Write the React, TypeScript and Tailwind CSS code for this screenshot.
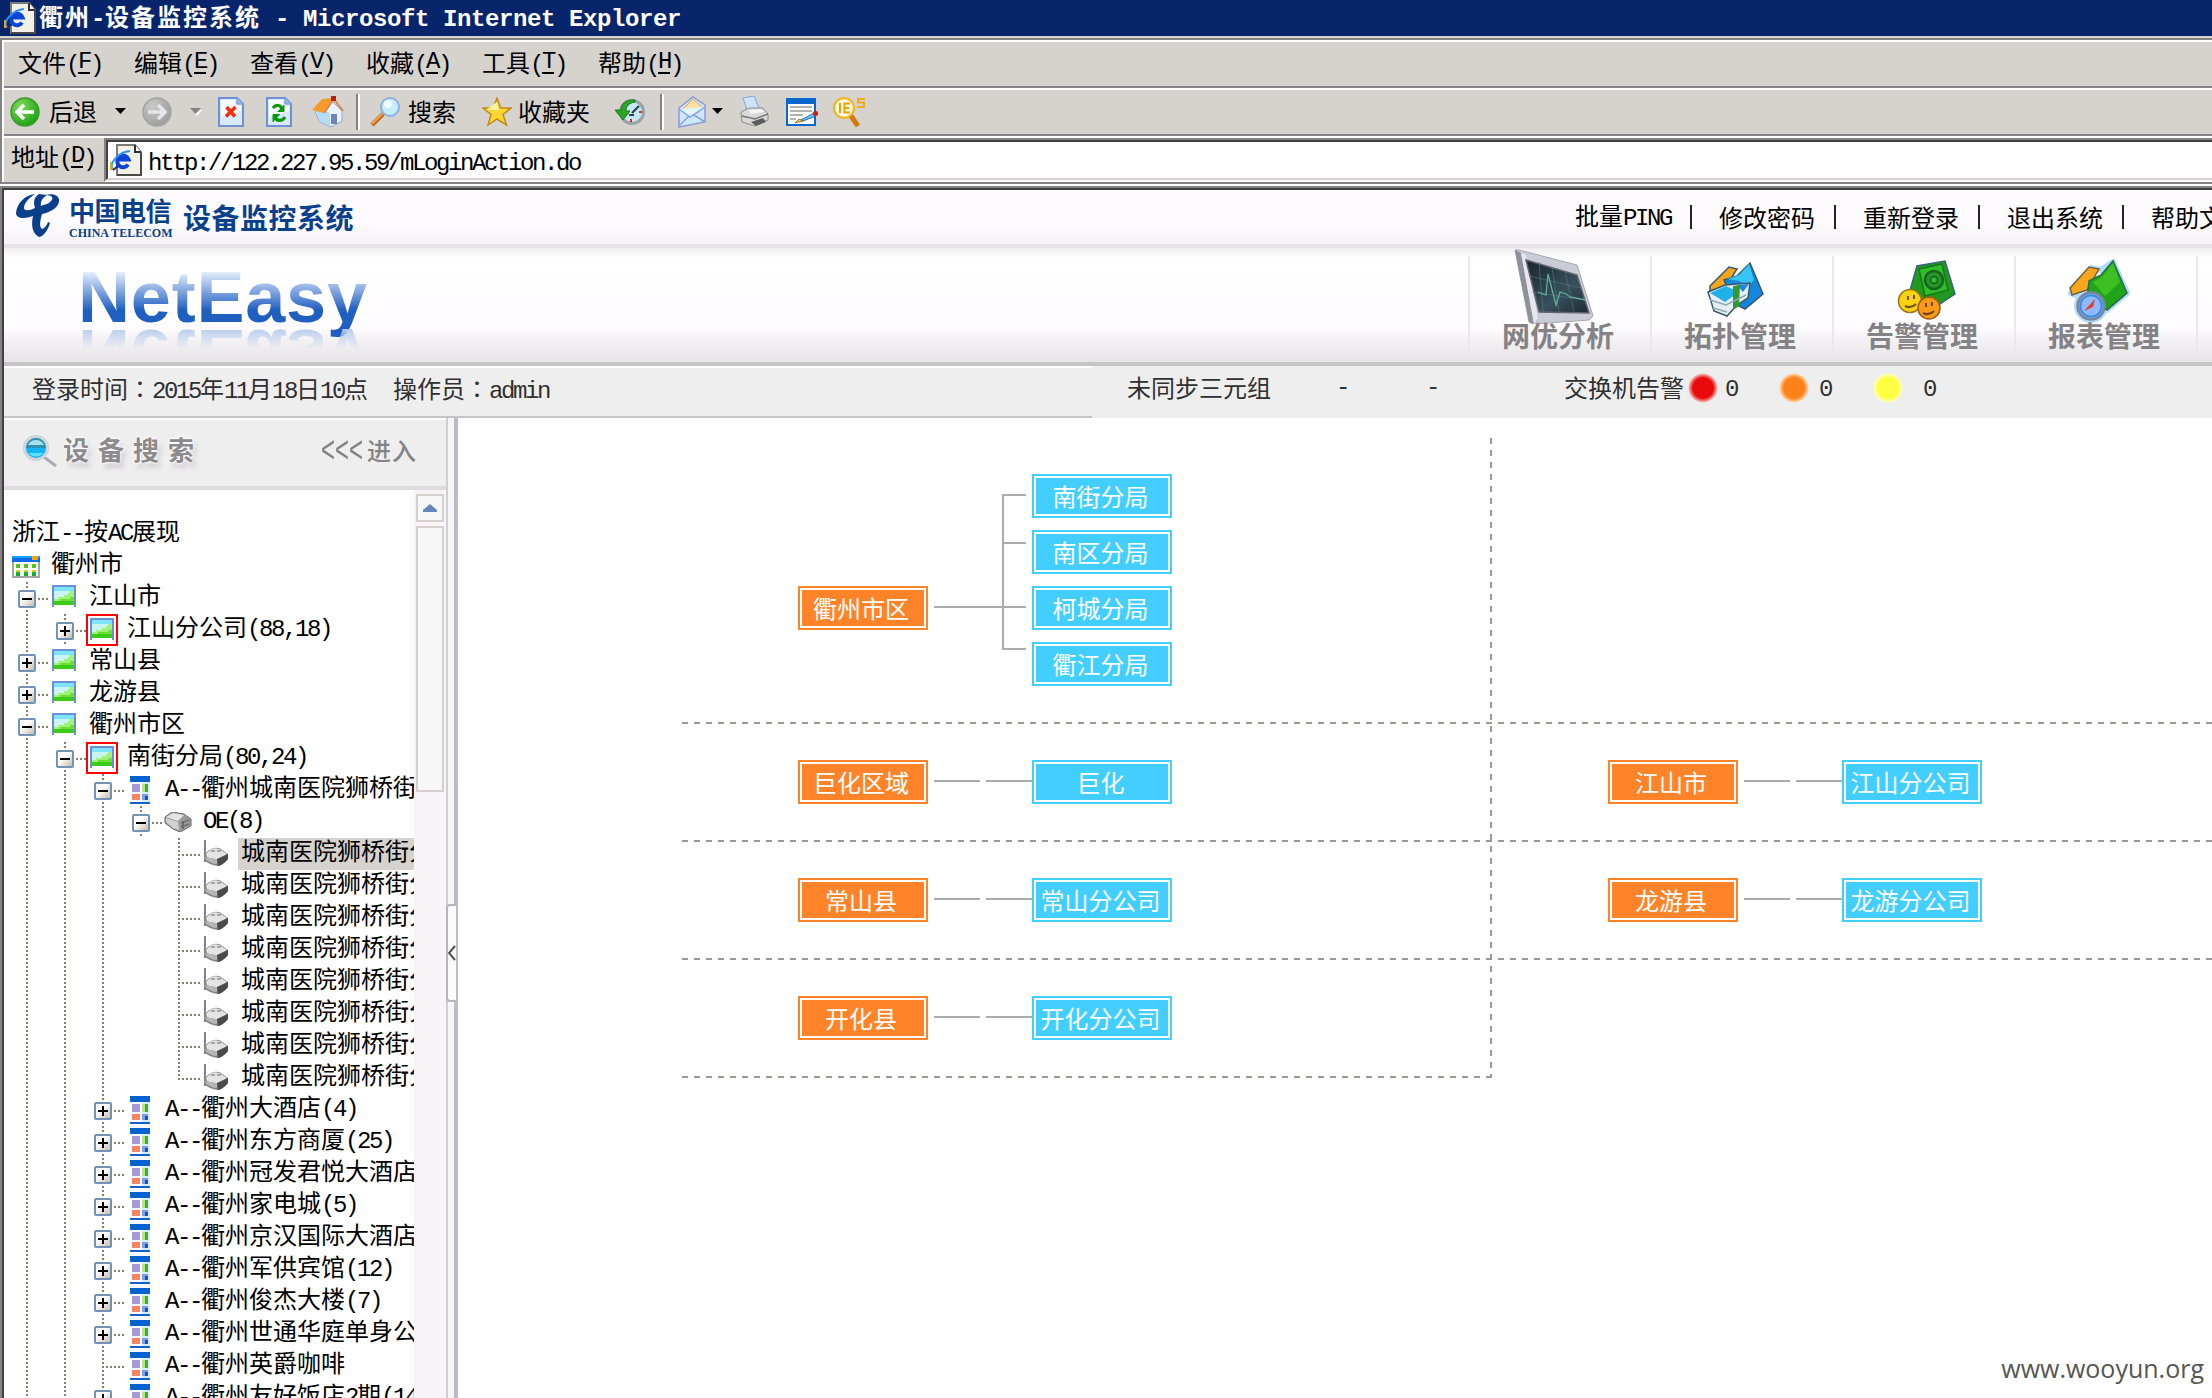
import React from 'react';

type GuideKind = 'line' | 'plus' | 'minus' | 'tee' | 'end' | 'none';
type IconKind = 'calendar' | 'area' | 'areaAlert' | 'site' | 'device' | 'port' | 'blank';

interface TreeNode {
  guides: GuideKind[];
  icon: IconKind;
  label: string;
  selected?: boolean;
}

/** Mixed Chinese / Latin text: Latin runs sit on a 12px half-width grid. */
function Txt({ children, bold = false }: { children: string; bold?: boolean }) {
  const runs = children.match(/[\x20-\x7e]+|：|[^\x20-\x7e：]+/g) ?? [];
  return (
    <span className="whitespace-pre">
      {runs.map((run, i) =>
        /^[\x20-\x7e]/.test(run) ? (
          <span
            key={i}
            className={
              bold
                ? "font-['Liberation_Mono',monospace] text-[24px] tracking-[-0.4px]"
                : "font-['Liberation_Mono',monospace] text-[24px] tracking-[-2.4px]"
            }
          >
            {run}
          </span>
        ) : run === '：' ? (
          <span key={i} lang="zh-TW" className="font-['Noto_Sans_CJK_TC',sans-serif]">
            {run}
          </span>
        ) : (
          <span key={i} className={bold ? 'tracking-[2px]' : ''}>
            {run}
          </span>
        ),
      )}
    </span>
  );
}

function IePage() {
  return (
    <svg width="34" height="32" viewBox="0 0 34 32" className="shrink-0">
      <path d="M7 1H25L31 8V31H7Z" fill="#f1f1e6" stroke="#7b7b7b" strokeWidth="2" />
      <path d="M25 1V8H31" fill="#fff" stroke="#333" strokeWidth="2" />
      <path d="M7 31H31V8" fill="none" stroke="#4a4a4a" strokeWidth="2" />
      <path d="M18 20.500A5.800 5.800 0 1 1 18.500 15.500H8" fill="none" stroke="#0b45d6" strokeWidth="4" />
      <path d="M2 24C0 18 9 8 20 7" fill="none" stroke="#2f8ff0" strokeWidth="2" />
      <path d="M1 18V25H5" fill="none" stroke="#d9a520" strokeWidth="2" />
      <path d="M3 26L8 22" fill="none" stroke="#152a8c" strokeWidth="2" />
    </svg>
  );
}

function RoundArrow({ back }: { back?: boolean }) {
  return (
    <svg width="30" height="30" viewBox="0 0 30 30">
      <defs>
        <radialGradient id={back ? 'gback' : 'gfwd'} cx="0.35" cy="0.3" r="0.8">
          <stop offset="0" stopColor={back ? '#7fdc5a' : '#c9c9c9'} />
          <stop offset="1" stopColor={back ? '#159a10' : '#9a9a9a'} />
        </radialGradient>
      </defs>
      <circle cx="15" cy="15" r="14" fill={back ? 'url(#gback)' : 'url(#gfwd)'} stroke={back ? '#3c9c2c' : '#a5a5a5'} strokeWidth="1.500" />
      <path
        d={back ? 'M24 15H8M14 8L7 15L14 22' : 'M6 15H22M16 8L23 15L16 22'}
        fill="none"
        stroke={back ? '#fff' : '#e6e6e6'}
        strokeWidth="3.600"
      />
    </svg>
  );
}

function Caret({ muted }: { muted?: boolean }) {
  return (
    <svg width="12" height="8" viewBox="0 0 12 8">
      {muted && <path d="M2 2H12L7 8Z" fill="#fff" />}
      <path d="M0 0H11L5.500 6Z" fill={muted ? '#848284' : '#000'} />
    </svg>
  );
}

function PageIcon({ kind }: { kind: 'stop' | 'refresh' }) {
  return (
    <svg width="26" height="30" viewBox="0 0 26 30">
      <path d="M1 1H19L25 7V29H1Z" fill="#dbe9ff" stroke="#6f8fd6" strokeWidth="2" />
      <path d="M3 3H17V9H23V14L3 20Z" fill="#f5faff" />
      <path d="M19 1V7H25" fill="#9fbcf0" stroke="#6f8fd6" />
      {kind === 'stop' ? (
        <path d="M8.500 10L17 19.500M17.500 10L8 19.500" stroke="#f03010" strokeWidth="3.600" />
      ) : (
        <g fill="none" stroke="#089a08" strokeWidth="3.200">
          <path d="M7 11C10 7 15 8 16 12" />
          <path d="M18 8V14.500H11.500" fill="#089a08" strokeWidth="1" />
          <path d="M19 20C16 25 10 24 9 20" />
          <path d="M7 25V17.500H14" fill="#089a08" strokeWidth="1" />
        </g>
      )}
    </svg>
  );
}

function HomeIcon() {
  return (
    <svg width="32" height="32" viewBox="0 0 32 32">
      <path d="M3 16L8 26L19 31L30 25V15L21 6L12 10Z" fill="#eaf4ff" stroke="#8aa6d8" />
      <path d="M4 15L8 26L18 30V18L12 12Z" fill="#b5dcf8" />
      <path d="M0 14L10 3L22 2L12 17Z" fill="#f79a2e" />
      <path d="M12 17L22 3L31 15" fill="none" stroke="#d88a50" strokeWidth="2" />
      <rect x="19" y="0" width="5" height="5" fill="#c01f10" />
      <rect x="19" y="18" width="6" height="10" fill="#6f86bd" />
    </svg>
  );
}

function SearchIcon() {
  return (
    <svg width="30" height="30" viewBox="0 0 30 30">
      <path d="M2 28L13 17" stroke="#b5671c" strokeWidth="4.500" />
      <path d="M2 27L12 17" stroke="#f5a34a" strokeWidth="2" />
      <circle cx="20" cy="10" r="9" fill="#c8ecff" stroke="#8bb0e2" strokeWidth="2" />
      <circle cx="18" cy="7" r="4" fill="#f2fbff" />
    </svg>
  );
}

function StarIcon() {
  return (
    <svg width="30" height="30" viewBox="0 0 30 30">
      <path d="M15 1L18.500 11H29L21 17.500L24.500 28L15 22L6 28L9 17.500L1 11H11.500Z" fill="#ffd735" stroke="#c28a16" strokeWidth="1.500" />
      <path d="M15 5L17 13H10L5 12.500" fill="#fff3a0" />
    </svg>
  );
}

function HistoryIcon() {
  return (
    <svg width="30" height="30" viewBox="0 0 30 30">
      <circle cx="17" cy="15" r="11.500" fill="#c3e9f8" stroke="#9aa1a8" strokeWidth="3" />
      <path d="M17 16L24 9M14 18H19" stroke="#33404a" strokeWidth="2.200" />
      <path d="M20 3C10 2 6 8 6 13H0L8 23L15 14H11C11 9 14 6 20 5Z" fill="#2ea52a" stroke="#167a16" />
      <rect x="15" y="22" width="2" height="3" fill="#e03010" />
      <rect x="24" y="14" width="3" height="2" fill="#e03010" />
    </svg>
  );
}

function MailIcon() {
  return (
    <svg width="28" height="32" viewBox="0 0 28 32">
      <path d="M1 12L15 1L27 9V26L1 31Z" fill="#cfe6ff" stroke="#8d9bd8" strokeWidth="1.500" />
      <path d="M5 13L15 3L24 11L20 17H8Z" fill="#fde0a8" stroke="#e3a75a" />
      <path d="M1 13L12 21L27 11M1 30L11 20M27 26L16 19" fill="#e4f4ff" stroke="#7fa7e0" strokeWidth="1.500" />
    </svg>
  );
}

function PrinterIcon() {
  return (
    <svg width="30" height="32" viewBox="0 0 30 32">
      <path d="M4 2L15 0L20 12L8 14Z" fill="#cfe3ff" stroke="#7fa3e0" />
      <path d="M2 16L10 12L24 12L29 18V24L16 30L3 26Z" fill="#d9d9d9" stroke="#8c8c8c" />
      <path d="M3 20L16 23L29 18" fill="none" stroke="#777" strokeWidth="1.500" />
      <path d="M12 26L24 22L27 26L17 30Z" fill="#5c5c5c" />
      <path d="M10 14L22 13L25 16L12 18Z" fill="#f4f4f4" />
    </svg>
  );
}

function EditIcon() {
  return (
    <svg width="33" height="28" viewBox="0 0 33 28">
      <rect x="1" y="1" width="28" height="26" fill="#fff" stroke="#0b66d0" strokeWidth="2" />
      <rect x="0" y="0" width="30" height="6" fill="#0b66d0" />
      <path d="M4 9H26M4 13H26M4 17H17M4 21H10" stroke="#999" strokeWidth="1.600" />
      <path d="M13 23L28 15L30 18L17 23Z" fill="#6fc0f5" stroke="#2a6fb5" />
      <path d="M9 25L13 21L17 23Z" fill="#f0c860" stroke="#8a6a20" strokeWidth="0.800" />
      <rect x="27" y="13" width="5" height="5" rx="2" fill="#c9200f" />
    </svg>
  );
}

function IeFindIcon() {
  return (
    <svg width="34" height="32" viewBox="0 0 34 32">
      <circle cx="11" cy="12" r="10" fill="#fff7d8" stroke="#f2b320" strokeWidth="2" />
      <path d="M18 20L25 30" stroke="#d87a10" strokeWidth="5" />
      <path d="M7 7V17M17 7.500H11.500V16.500H17M11.500 12H16" fill="none" stroke="#e8a20c" strokeWidth="2" />
      <path d="M32 3H25V6.500H31V11H24" fill="none" stroke="#f0ac14" strokeWidth="2" />
    </svg>
  );
}

function Groove() {
  return <div className="h-9 w-1 border-l-2 border-r-2 border-l-[#848284] border-r-white" />;
}

const menus = [
  ['文件', 'F'],
  ['编辑', 'E'],
  ['查看', 'V'],
  ['收藏', 'A'],
  ['工具', 'T'],
  ['帮助', 'H'],
];

function BrowserChrome() {
  return (
    <div className="shrink-0 bg-[#d6d3ce] text-black">
      <div className="flex h-9 items-center bg-[#08246b] pl-[4px] text-white">
        <IePage />
        <div className="ml-[1px] flex h-9 items-center text-[24px] leading-9 font-bold">
          <Txt bold>衢州-设备监控系统 - Microsoft Internet Explorer</Txt>
        </div>
      </div>
      <div className="mt-[2px] border-t-2 border-l-2 border-[#848284]">
        <div className="border-t-2 border-l-2 border-white">
          <div className="flex h-11 items-center gap-8 pl-[14px]">
            {menus.map(([name, key]) => (
              <div key={key} className="flex w-[84px] leading-none whitespace-nowrap">
                <Txt>{name + '('}</Txt>
                <span className="font-['Liberation_Mono',monospace] tracking-[-2.4px] underline underline-offset-4">{key}</span>
                <Txt>)</Txt>
              </div>
            ))}
          </div>
          <div className="h-1 border-t-2 border-b-2 border-t-[#848284] border-b-white" />
          <div className="flex h-11 items-center">
            <div className="ml-[6px] flex"><RoundArrow back /></div>
            <div className="mb-[2px] ml-[9px] w-[49px] leading-none">后退</div>
            <div className="ml-[17px]"><Caret /></div>
            <div className="ml-[15px]"><RoundArrow /></div>
            <div className="ml-[18px]"><Caret muted /></div>
            <div className="ml-4"><PageIcon kind="stop" /></div>
            <div className="ml-[22px]"><PageIcon kind="refresh" /></div>
            <div className="ml-5"><HomeIcon /></div>
            <div className="ml-3"><Groove /></div>
            <div className="ml-[10px]"><SearchIcon /></div>
            <div className="mb-[2px] ml-[8px] w-[49px] leading-none">搜索</div>
            <div className="ml-[25px]"><StarIcon /></div>
            <div className="mb-[2px] ml-[6px] w-[73px] leading-none">收藏夹</div>
            <div className="ml-[24px]"><HistoryIcon /></div>
            <div className="ml-[15px]"><Groove /></div>
            <div className="ml-[14px]"><MailIcon /></div>
            <div className="ml-[6px]"><Caret /></div>
            <div className="ml-[15px]"><PrinterIcon /></div>
            <div className="ml-[17px]"><EditIcon /></div>
            <div className="ml-[14px]"><IeFindIcon /></div>
          </div>
          <div className="h-1 border-t-2 border-b-2 border-t-[#848284] border-b-white" />
          <div className="flex h-11">
            <div className="flex w-[100px] pt-[6px] pl-[7px] leading-none whitespace-nowrap">
              <Txt>地址(</Txt>
              <span className="font-['Liberation_Mono',monospace] tracking-[-2.4px] underline underline-offset-4">D</span>
              <Txt>)</Txt>
            </div>
            <div className="flex-1 border-t-2 border-b-2 border-l-2 border-t-[#848284] border-b-white border-l-[#848284]">
              <div className="flex h-10 items-center border-t-2 border-b-2 border-l-2 border-t-[#424142] border-b-[#d6d3ce] border-l-[#424142] bg-white pl-[2px]">
                <IePage />
                <div className="ml-[4px] pt-1 leading-none">
                  <Txt>http://122.227.95.59/mLoginAction.do</Txt>
                </div>
              </div>
            </div>
          </div>
        </div>
      </div>
      <div className="h-1 border-t-2 border-b-2 border-t-[#848284] border-b-white" />
    </div>
  );
}

function TelecomMark() {
  return (
    <svg width="44" height="43" viewBox="0 0 44 43" fill="#0a3f8c">
      <path d="M0 19C1 9 9 1 19 0C13 4 8 9 8 14C8 17 13 17 19 14C17 8 18 3 23 0L31 1C26 4 24 8 25 12C32 9 38 7 36 3C35 1 32 2 30 1C36 -1 42 1 43 5C44 12 36 18 26 20C24 27 23 33 26 35C29 34 31 31 32 28L34 29C32 36 28 42 23 43C16 39 15 31 17 22C9 25 0 25 0 19Z" />
      <path d="M31 5C35 4 36 6 33 9L28 11C30 9 31 7 31 5Z" fill="#fff" />
    </svg>
  );
}

const links = ['批量PING', '修改密码', '重新登录', '退出系统', '帮助文档'];

function MonitorDrawing() {
  return (
    <svg width="182" height="76" viewBox="0 0 182 76">
      <defs>
        <linearGradient id="screen" x1="0" y1="0" x2="1" y2="1">
          <stop offset="0" stopColor="#18242b" />
          <stop offset="0.6" stopColor="#38505c" />
          <stop offset="1" stopColor="#1d2a31" />
        </linearGradient>
      </defs>
      <path d="M46 2L50 2L108 17L124 68L120 72L64 76L60 74Z" fill="#c9ccd6" stroke="#a5a7af" />
      <path d="M46 2L60 74L65 76L52 5Z" fill="#8e909a" />
      <path d="M52 5L57 7L69 70L65 76Z" fill="#e6e8ee" />
      <path d="M57 12L108 27L120 65L70 64Z" fill="url(#screen)" stroke="#62656d" strokeWidth="1.500" />
      <path d="M70 14L74 64M83 19L90 64M96 23L105 64M60 28L112 40M63 44L116 52" stroke="#5d7781" strokeWidth="0.600" />
      <path d="M69 44L77 47L79 26L87 57L91 44L97 46L101 49L117 52" fill="none" stroke="#5fae97" strokeWidth="1.300" />
    </svg>
  );
}

function TopologyDrawing() {
  return (
    <svg width="182" height="76" viewBox="0 0 182 76" stroke="#35586b" strokeWidth="1.500">
      <path d="M59 38L78 19L86 21L74 40L59 46Z" fill="#f6a61b" />
      <path d="M73 32L86 28L99 15L112 46L94 61L84 56Z" fill="#1487dc" />
      <path d="M76 31L88 27L98 16L103 32L98 38L88 33Z" fill="#35c4f5" stroke="none" />
      <path d="M57 44L74 37L99 35L97 50L86 57L76 68L63 63Z" fill="#e6eef2" />
      <path d="M59 45L75 38L88 44L74 54Z" fill="#20b0ea" stroke="none" />
      <path d="M86 37L98 36L92 44Z" fill="#1c86dc" stroke="none" />
      <path d="M82 38L89 37L88 58L82 62Z" fill="#2f9a31" stroke="none" />
      <path d="M59 52L75 57L95 47M62 60L76 64" fill="none" stroke="#8caab6" />
    </svg>
  );
}

function AlarmDrawing() {
  return (
    <svg width="182" height="76" viewBox="0 0 182 76" strokeWidth="1.500">
      <path d="M76 46L84 18L112 13L122 46L104 58L84 54Z" fill="#1f9a1d" stroke="#35647a" />
      <path d="M86 21L109 16L115 42L92 48Z" fill="#2fbe28" stroke="#19751e" />
      <circle cx="101" cy="32" r="9" fill="#259429" stroke="#18621d" strokeWidth="2.500" />
      <circle cx="101" cy="32" r="3.500" fill="#2fb634" stroke="#18621d" />
      <circle cx="77" cy="53" r="11.500" fill="#fbd213" stroke="#9a7413" />
      <circle cx="96" cy="60" r="11" fill="#fb9a17" stroke="#9a5b13" />
      <path d="M75 48V52M81 47V51M72 58Q78 61 83 56" fill="none" stroke="#71521a" strokeWidth="2" />
      <path d="M93 55V59M99 54V58M90 65Q96 68 101 63" fill="none" stroke="#71451a" strokeWidth="2" />
    </svg>
  );
}

function ReportDrawing() {
  return (
    <svg width="182" height="76" viewBox="0 0 182 76" strokeWidth="1.500">
      <g fill="none" stroke="#b4dcff" strokeWidth="6" strokeLinejoin="round">
        <path d="M56 45L76 20L86 22L98 14L112 45L92 62Z" />
        <circle cx="76" cy="58" r="14" />
      </g>
      <path d="M55 40L74 19L84 21L72 42L57 47Z" fill="#f9a51d" stroke="#6d6440" />
      <path d="M74 33L86 27L98 13L112 45L92 62L72 52Z" fill="#22a41a" stroke="#2b6b49" />
      <path d="M78 34L87 29L98 15L105 34L90 48Z" fill="#3ec024" stroke="none" />
      <circle cx="76" cy="58" r="13.500" fill="#58a8f5" stroke="#7c8699" strokeWidth="2.500" />
      <circle cx="76" cy="58" r="10.500" fill="#8fb8ff" stroke="#3f83df" />
      <path d="M69 63L80 51L78 59Z" fill="#e2402d" />
    </svg>
  );
}

const navs = [
  { label: '网优分析', art: <MonitorDrawing /> },
  { label: '拓扑管理', art: <TopologyDrawing /> },
  { label: '告警管理', art: <AlarmDrawing /> },
  { label: '报表管理', art: <ReportDrawing /> },
];

function Header() {
  return (
    <div className="shrink-0">
      <div className="flex h-[54px] items-start bg-linear-to-b from-[#fdfbfe] from-60% to-[#f5f3f5] pl-3">
        <div className="mt-1 w-11 shrink-0"><TelecomMark /></div>
        <div className="mt-[3px] ml-[9px] w-[102px] shrink-0 whitespace-nowrap text-[#0a3f8c]">
          <div className="text-[26px] leading-[33px] font-bold tracking-[-0.5px]">中国电信</div>
          <div className="mt-[2px] font-['Liberation_Serif',serif] text-[12px] leading-[10px] font-bold">CHINA TELECOM</div>
        </div>
        <div className="mt-[11px] ml-3 w-[171px] shrink-0 text-[28px] leading-[32px] font-bold tracking-[0.5px] whitespace-nowrap text-[#0a418c]">
          设备监控系统
        </div>
        <div className="mt-[10px] ml-[1221px] flex min-w-0 flex-1 overflow-hidden">
          {links.map((l, i) => (
            <div key={l} className="flex w-[144px] shrink-0 items-center leading-[30px] whitespace-nowrap text-black">
              <div className="w-[96px]"><Txt>{l}</Txt></div>
              {i < 4 && <div className="ml-[19px] h-6 w-[2px] bg-[#222]" />}
            </div>
          ))}
        </div>
      </div>
      <div className="h-1 bg-[#e5e3e6]" />
      <div className="flex h-[114px] bg-[linear-gradient(to_bottom,#efedf0_0,#ffffff_10px,#fffdff_78px,#f3f1f4_92px,#e6e4e7_114px)]">
        <div className="relative ml-[74px] w-[1390px] shrink-0">
          <div className="mt-[8px] h-[82px] bg-linear-to-b from-[#e4ecfa] from-20% via-[#5c8ad4] via-52% to-[#1f5fc0] to-66% bg-clip-text font-['Liberation_Sans',sans-serif] text-[72px] leading-[82px] font-bold tracking-[0.8px] text-transparent">
            NetEasy
          </div>
          <div className="absolute top-[81px] left-0 h-[20px] w-[320px] overflow-hidden mask-linear-180 mask-linear-from-0% mask-linear-to-100%">
            <div
              aria-hidden="true"
              className="-mt-[15px] scale-y-[-1] font-['Liberation_Sans',sans-serif] text-[72px] leading-[82px] font-bold tracking-[0.8px] text-[#b9ccec]"
            >
              NetEasy
            </div>
          </div>
        </div>
        {navs.map((n) => (
          <div key={n.label} className="mt-2 flex w-[182px] shrink-0 flex-col items-center border-l-2 border-[#ebe8ec]">
            <div className="-mt-2 h-[71px] w-[182px]">{n.art}</div>
            <div className="pr-1 text-[28px] leading-[32px] font-bold text-[#848284]">{n.label}</div>
          </div>
        ))}
        <div className="mt-2 w-4 border-l-2 border-[#ebe8ec]" />
      </div>
      <div className="flex h-[56px] border-t-4 border-[#c6c4c6] bg-[#efeeef] text-[#313031]">
        <div className="flex h-[52px] w-[1088px] shrink-0 items-center border-t-2 border-b-2 border-t-white border-b-[#c6c4c6] pl-[28px] leading-none">
          <div className="mb-[5px] w-[361px]"><Txt>登录时间：2015年11月18日10点</Txt></div>
          <div className="mb-[5px]"><Txt>操作员：admin</Txt></div>
        </div>
        <div className="flex h-[44px] items-center pl-[35px] leading-none whitespace-nowrap">
          <div className="mb-[2px] w-[209px]">未同步三元组</div>
          <div className="mb-1 w-[90px]"><Txt>-</Txt></div>
          <div className="mb-1 w-[138px]"><Txt>-</Txt></div>
          <div className="mb-[2px] w-[124px]">交换机告警</div>
          <div className="h-[30px] w-[30px] rounded-full bg-[radial-gradient(closest-side,#e80b0b_68%,#f79a9a_90%,transparent)]" />
          <div className="ml-[7px] w-[54px]"><Txt>0</Txt></div>
          <div className="h-[30px] w-[30px] rounded-full bg-[radial-gradient(closest-side,#ff8218_68%,#ffc68e_90%,transparent)]" />
          <div className="ml-[10px] w-[54px]"><Txt>0</Txt></div>
          <div className="h-[30px] w-[30px] rounded-full bg-[radial-gradient(closest-side,#ffff42_68%,#ffffa8_90%,transparent)]" />
          <div className="ml-[20px]"><Txt>0</Txt></div>
        </div>
      </div>
    </div>
  );
}

function NodeIcon({ kind }: { kind: IconKind }) {
  switch (kind) {
    case 'calendar':
      return (
        <svg width="28" height="22" viewBox="0 0 28 22" className="mt-[2px]">
          <rect x="1" y="1" width="26" height="20" fill="#fff" stroke="#a5a5a5" strokeWidth="2" />
          <rect width="28" height="6" fill="#0a6ae8" />
          <rect width="28" height="2" fill="#18a0ff" />
          <rect x="20" width="6" height="4" fill="#f7a010" />
          {[4, 12, 20].map((x) => (
            <g key={x}>
              <rect x={x} y="8" width="4" height="4" fill="#4cc818" />
              <rect x={x} y="14" width="4" height="6" fill="#10b030" />
              <rect x={x} y="14" width="4" height="2" fill="#d8d818" />
            </g>
          ))}
        </svg>
      );
    case 'area':
    case 'areaAlert': {
      const pic = (
        <svg width="24" height="22" viewBox="0 0 24 22">
          <rect width="24" height="22" fill="#6a8fd8" />
          <rect x="2" y="2" width="20" height="20" fill="#7fe3fa" />
          <rect x="2" y="6" width="20" height="8" fill="#c9f4f4" />
          <path d="M2 14H6V12H12V10H16V8H18V6H22V20H2Z" fill="#a2f07a" />
          <path d="M2 16H8V14H18V12H22V20H2Z" fill="#6be030" />
          <rect x="2" y="16" width="20" height="4" fill="#3ccb16" />
          <rect x="2" y="20" width="20" height="2" fill="#fff" />
        </svg>
      );
      return kind === 'area' ? (
        <div className="-mt-1">{pic}</div>
      ) : (
        <div className="flex h-8 w-8 justify-center border-2 border-[#ff0000] pt-[2px]">{pic}</div>
      );
    }
    case 'site':
      return (
        <svg width="20" height="28" viewBox="0 0 20 28">
          <rect width="20" height="28" fill="#dcecff" />
          <rect width="20" height="6" fill="#0a62d0" />
          <rect x="0" y="6" width="12" height="20" fill="#fff" />
          <rect x="2" y="8" width="8" height="8" fill="#a39bd3" />
          <rect x="12" y="8" width="6" height="8" fill="#b5e0a0" />
          <rect x="15" y="8" width="3" height="8" fill="#3fb318" />
          <rect x="2" y="18" width="8" height="6" fill="#f78468" />
          <rect x="12" y="18" width="6" height="6" fill="#7ea0dc" />
          <rect x="15" y="20" width="3" height="4" fill="#1f4fb0" />
          <rect y="26" width="20" height="2" fill="#0a62d0" />
        </svg>
      );
    case 'device':
      return (
        <svg width="28" height="20" viewBox="0 0 28 20">
          <path d="M1 5L8 0L20 2L27 7V14L16 20L9 17L1 11Z" fill="#9d9d9d" stroke="#6b6b6b" />
          <path d="M2 5L9 1L20 3L14 9Z" fill="#e4e4e4" />
          <path d="M14 9L22 3L26 8V14L16 19Z" fill="#9a9a9a" />
          <path d="M2 6L14 10L15 18L9 16L2 10Z" fill="#d2d2d2" />
          <path d="M17 11L25 8M17 15L25 12M19 9V17" stroke="#5e5e5e" strokeWidth="1.300" />
        </svg>
      );
    case 'port':
      return (
        <svg width="26" height="28" viewBox="0 0 26 28" className="mt-[-2px]">
          <rect x="1" y="1" width="2" height="22" fill="#848284" />
          <path d="M1 16L6 11Q12 7 18 10L25 15V20Q20 26 15 27Q6 26 1 21Z" fill="#848284" />
          <path d="M3 15L8 10Q13 8 18 11L24 15L15 20Q8 20 4 18Z" fill="#e4e4e4" />
          <path d="M8 11H12V13H8ZM14 11H18V13H14Z" fill="#a5a5a5" />
          <path d="M3 18Q8 20 14 20V25Q8 25 2 20Z" fill="#b5b5b5" />
          <path d="M14 20L25 15V20Q20 26 15 27Z" fill="#4a4a4a" />
        </svg>
      );
    default:
      return null;
  }
}

const dotsV = 'bg-[repeating-linear-gradient(to_bottom,#8c826b_0_2px,transparent_2px_4px)]';
const dotsH = 'bg-[repeating-linear-gradient(to_right,#8c826b_0_2px,transparent_2px_4px)]';

function Guide({ kind }: { kind: GuideKind }) {
  const toggle = kind === 'plus' || kind === 'minus';
  return (
    <div className="relative h-8 w-[38px] shrink-0">
      {kind !== 'none' && kind !== 'end' && <div className={`absolute top-0 left-[18px] h-8 w-[2px] ${dotsV}`} />}
      {kind === 'end' && <div className={`absolute top-0 left-[18px] h-[18px] w-[2px] ${dotsV}`} />}
      {(kind === 'tee' || kind === 'end') && <div className={`absolute top-4 left-[18px] h-[2px] w-[22px] ${dotsH}`} />}
      {toggle && <div className={`absolute top-4 left-[30px] h-[2px] w-[10px] ${dotsH}`} />}
      {toggle && (
        <div className="absolute top-2 left-[10px] flex h-[18px] w-[18px] items-center justify-center rounded-[2px] border-2 border-[#7393b5] bg-linear-to-br from-white from-40% to-[#c6bca8]">
          <div className="h-[2px] w-[10px] bg-black" />
          {kind === 'plus' && <div className="absolute h-[10px] w-[2px] bg-black" />}
        </div>
      )}
    </div>
  );
}

const L: GuideKind = 'line';
const port = (last = false, selected = false): TreeNode => ({
  guides: [L, L, L, 'none', last ? 'end' : 'tee'],
  icon: 'port',
  label: '城南医院狮桥街分机',
  selected,
});
const site = (label: string, g: GuideKind = 'plus'): TreeNode => ({ guides: [L, L, g], icon: 'site', label });

const tree: TreeNode[] = [
  { guides: [], icon: 'calendar', label: '衢州市' },
  { guides: ['minus'], icon: 'area', label: '江山市' },
  { guides: [L, 'plus'], icon: 'areaAlert', label: '江山分公司(88,18)' },
  { guides: ['plus'], icon: 'area', label: '常山县' },
  { guides: ['plus'], icon: 'area', label: '龙游县' },
  { guides: ['minus'], icon: 'area', label: '衢州市区' },
  { guides: [L, 'minus'], icon: 'areaAlert', label: '南街分局(80,24)' },
  site('A--衢州城南医院狮桥街', 'minus'),
  { guides: [L, L, L, 'minus'], icon: 'device', label: 'OE(8)' },
  port(false, true),
  port(),
  port(),
  port(),
  port(),
  port(),
  port(),
  port(true),
  site('A--衢州大酒店(4)'),
  site('A--衢州东方商厦(25)'),
  site('A--衢州冠发君悦大酒店'),
  site('A--衢州家电城(5)'),
  site('A--衢州京汉国际大酒店'),
  site('A--衢州军供宾馆(12)'),
  site('A--衢州俊杰大楼(7)'),
  site('A--衢州世通华庭单身公'),
  site('A--衢州英爵咖啡', 'tee'),
  site('A--衢州友好饭店2期(14'),
];

function Sidebar() {
  return (
    <div className="flex h-full w-[454px] shrink-0">
      <div className="flex w-[442px] flex-col">
        <div className="flex h-[72px] shrink-0 items-start border-t-2 border-b-4 border-t-white border-b-[#dddbdd] bg-[#efeeef] pl-[18px]">
          <svg width="36" height="34" viewBox="0 0 36 34" className="mt-[14px] shrink-0">
            <path d="M22 23L34 32" stroke="#a8adb5" strokeWidth="3" />
            <circle cx="14" cy="14" r="11.500" fill="#12b4f4" stroke="#cfd4da" strokeWidth="3" />
            <path d="M4 14A10 10 0 0 1 24 14Z" fill="#2f8fae" />
            <path d="M6 11A9 9 0 0 1 22 11Z" fill="#a5e0ee" />
            <path d="M6 19Q14 26 22 19" fill="#5fe0ff" />
          </svg>
          <div className="mt-[12px] ml-[5px] w-[256px] text-[26px] leading-[34px] font-bold tracking-[9px] whitespace-nowrap text-[#8c8a8c] [text-shadow:0_0_2px_#fff,0_0_3px_#fff,0_0_4px_#fff,3px_5px_5px_#c8c6c8]">
            设备搜索
          </div>
          <div className="mt-[14px] ml-[2px] flex items-center leading-[32px] font-medium text-[#848284]">
            <span className="inline-block scale-y-150 font-['Liberation_Sans',sans-serif]">&lt;&lt;&lt;</span>
            <span className="ml-1 tracking-[1px]">进入</span>
          </div>
        </div>
        <div className="flex min-h-0 flex-1">
          <div className="w-[410px] shrink-0 overflow-hidden bg-white pl-1 text-black">
            <div className="h-[60px] overflow-hidden pt-[27px] pl-1 leading-[26px] whitespace-nowrap">
              <Txt>浙江--按AC展现</Txt>
            </div>
            {tree.map((n, i) => (
              <div key={i} className="flex h-8 whitespace-nowrap">
                {n.guides.map((g, j) => (
                  <Guide key={j} kind={g} />
                ))}
                <div className="flex h-8 w-9 shrink-0 items-center justify-center">
                  <NodeIcon kind={n.icon} />
                </div>
                <div
                  className={
                    n.selected
                      ? 'ml-1 h-8 flex-1 overflow-hidden bg-[#d6d3ce] pl-[3px] leading-[24px]'
                      : 'ml-1 h-8 flex-1 overflow-hidden pl-[3px] leading-[24px]'
                  }
                >
                  <Txt>{n.label}</Txt>
                </div>
              </div>
            ))}
          </div>
          <div className="w-8 bg-[#f7f3f7] pt-1 pl-[2px]">
            <div className="flex h-7 w-7 items-center justify-center border-2 border-[#d6cfce] bg-[#f7f7f7]">
              <svg width="14" height="8" viewBox="0 0 14 8">
                <path d="M7 0L14 6V8H0V6Z" fill="#6586b8" />
              </svg>
            </div>
            <div className="mt-1 h-[266px] w-7 border-2 border-[#d6cfce] bg-[#f7f7f7]" />
          </div>
        </div>
      </div>
      <div className="flex w-3 items-start border-r-4 border-l-2 border-r-[#bcbcc8] border-l-[#cecfd6] bg-[#f7f5f9] pt-[486px]">
        <div className="-ml-[2px] flex h-[98px] w-[10px] shrink-0 items-center justify-end rounded-l border-2 border-r-0 border-[#b5b6bd] bg-[#fbfafc]">
          <svg width="8" height="16" viewBox="0 0 8 16">
            <path d="M7 1L1 8L7 15" fill="none" stroke="#525152" strokeWidth="2" />
          </svg>
        </div>
      </div>
    </div>
  );
}

function Area({ name }: { name: string }) {
  return (
    <div className="h-11 w-[130px] shrink-0 border-2 border-[#ff8429] bg-[#ff8429]">
      <div className="h-10 border-2 border-white pr-1 text-center leading-[35px] text-white">{name}</div>
    </div>
  );
}

function Branch({ name }: { name: string }) {
  return (
    <div className="h-11 w-[140px] shrink-0 border-2 border-[#42cfff] bg-[#42cfff]">
      <div className="h-10 border-2 border-white pr-[3px] text-center leading-[35px] whitespace-nowrap text-white">{name}</div>
    </div>
  );
}

function Pair({ area, branch }: { area: string; branch: string }) {
  return (
    <div className="flex pt-[36px] pl-[116px]">
      <Area name={area} />
      <div className="mt-5 ml-[6px] h-[2px] w-[46px] bg-[#adaaad]" />
      <div className="mt-5 ml-[6px] h-[2px] w-[46px] bg-[#adaaad]" />
      <Branch name={branch} />
    </div>
  );
}

const dashH = 'h-[2px] bg-[repeating-linear-gradient(to_right,#9c9694_0_6px,transparent_6px_12px)]';
const dashV = 'w-[2px] bg-[repeating-linear-gradient(to_bottom,#9c9694_0_6px,transparent_6px_12px)]';

const rows = [
  [['巨化区域', '巨化'], ['江山市', '江山分公司']],
  [['常山县', '常山分公司'], ['龙游县', '龙游分公司']],
  [['开化县', '开化分公司']],
];

function Diagram() {
  return (
    <div className="relative min-w-0 flex-1 bg-white pl-[224px]">
      <div className="flex h-[304px] pt-[56px] pl-[116px]">
        <div className="mt-[112px]"><Area name="衢州市区" /></div>
        <svg width="92" height="212" viewBox="0 0 92 212" className="mx-[6px] shrink-0" fill="none" stroke="#adaaad" strokeWidth="2">
          <path d="M0 133H92M92 21H69V175H92M69 69H92" />
        </svg>
        <div className="flex flex-col gap-3">
          {['南街分局', '南区分局', '柯城分局', '衢江分局'].map((b) => (
            <Branch key={b} name={b} />
          ))}
        </div>
      </div>
      {rows.map((r, i) => (
        <div key={i} className="h-[118px]">
          <div className={dashH} />
          <div className="flex">
            {r.map(([a, b]) => (
              <div key={a} className="w-[810px] shrink-0 last:w-auto">
                <Pair area={a} branch={b} />
              </div>
            ))}
          </div>
        </div>
      ))}
      <div className={`${dashH} w-[810px]`} />
      <div className={`absolute top-5 left-[1032px] h-[640px] ${dashV}`} />
      <div className="absolute right-[8px] bottom-[14px] font-['Open_Sans',sans-serif] text-[25px] leading-[32px] text-[#555]">
        www.wooyun.org
      </div>
    </div>
  );
}

export default function App() {
  return (
    <div className="flex h-[1398px] w-[2212px] flex-col overflow-hidden bg-white font-['Noto_Sans_CJK_SC',sans-serif] text-[24px]">
      <BrowserChrome />
      <div className="min-h-0 flex-1 border-t-2 border-l-2 border-[#848284]">
        <div className="flex h-full flex-col overflow-hidden border-t-2 border-l-2 border-[#424142]">
          <Header />
          <div className="flex min-h-0 flex-1 overflow-hidden">
            <Sidebar />
            <Diagram />
          </div>
        </div>
      </div>
    </div>
  );
}
